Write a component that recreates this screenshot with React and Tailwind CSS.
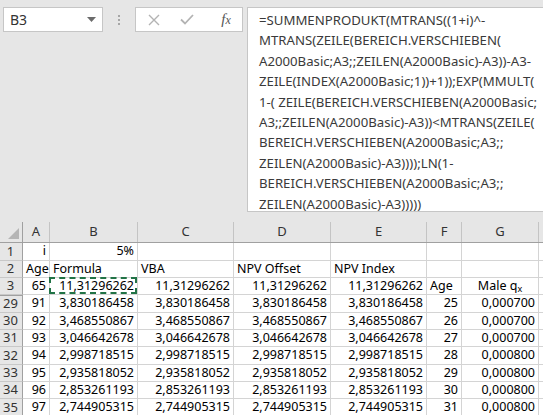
import React from 'react';

const formulaLines = [
  '=SUMMENPRODUKT(MTRANS((1+i)^-',
  'MTRANS(ZEILE(BEREICH.VERSCHIEBEN(',
  'A2000Basic;A3;;ZEILEN(A2000Basic)-A3))-A3-',
  'ZEILE(INDEX(A2000Basic;1))+1));EXP(MMULT(',
  '1-( ZEILE(BEREICH.VERSCHIEBEN(A2000Basic;',
  'A3;;ZEILEN(A2000Basic)-A3))<MTRANS(ZEILE(',
  'BEREICH.VERSCHIEBEN(A2000Basic;A3;;',
  'ZEILEN(A2000Basic)-A3))));LN(1-',
  'BEREICH.VERSCHIEBEN(A2000Basic;A3;;',
  'ZEILEN(A2000Basic)-A3)))))',
];

const cols = [
  { key: 'A', w: 'w-[27px]' },
  { key: 'B', w: 'w-[88px]' },
  { key: 'C', w: 'w-[96px]' },
  { key: 'D', w: 'w-[97px]' },
  { key: 'E', w: 'w-[96px]' },
  { key: 'F', w: 'w-[35px]' },
  { key: 'G', w: 'w-[77px]' },
];

const values = [
  ['91', '3,830186458', '25', '0,000700'],
  ['92', '3,468550867', '26', '0,000700'],
  ['93', '3,046642678', '27', '0,000700'],
  ['94', '2,998718515', '28', '0,000800'],
  ['95', '2,935818052', '29', '0,000800'],
  ['96', '2,853261193', '30', '0,000800'],
  ['97', '2,744905315', '31', '0,000800'],
];

const rows = [
  { n: '1', h: 'h-[18px]', cells: [['i', 'r'], ['5%', 'r'], ['', 'l'], ['', 'l'], ['', 'l'], ['', 'l'], ['', 'l']] },
  { n: '2', h: 'h-[17px]', cells: [['Age', 'l'], ['Formula', 'l'], ['VBA', 'l'], ['NPV Offset', 'l'], ['NPV Index', 'l'], ['', 'l'], ['', 'l']] },
  {
    n: '3',
    h: 'h-[17px]',
    cells: [['65', 'r'], ['11,31296262', 'r', true], ['11,31296262', 'r'], ['11,31296262', 'r'], ['11,31296262', 'r'], ['Age', 'l'], ['qx', 'c']],
  },
  ...values.map((v, i) => ({
    n: String(29 + i),
    h: ['h-[18px]', 'h-[17px]', 'h-[17px]'][i % 3],
    top: i === 0,
    cells: [[v[0], 'r'], [v[1], 'r'], [v[1], 'r'], [v[1], 'r'], [v[1], 'r'], [v[2], 'r'], [v[3], 'r']],
  })),
];

const alignClass = { r: 'justify-end', l: 'justify-start', c: 'justify-center' };

const Cell = ({ text, align, width, marquee }) => (
  <div
    className={`relative ${width} shrink-0 h-full flex items-center px-[3px] border-r border-b border-[#d4d4d4] overflow-visible whitespace-nowrap ${alignClass[align]}`}
  >
    {text === 'qx' ? (
      <span>
        Male q<sub className="text-[9px]">x</sub>
      </span>
    ) : (
      <span>{text}</span>
    )}
    {marquee && <div className="absolute -left-px -top-px w-[calc(100%+1px)] h-[calc(100%+1px)] border-2 border-dashed border-[#217346]" />}
  </div>
);

export default function App() {
  return (
    <div className="w-[543px] h-[415px] overflow-hidden bg-[#e6e6e6] flex flex-col" style={{ fontFamily: '"Noto Sans", "Open Sans", sans-serif' }}>
      {/* formula bar */}
      <div className="flex items-start pt-[7px] pl-[3px] h-[222px] shrink-0">
        <div className="w-[100px] h-[25px] bg-white border border-[#c6c6c6] flex items-center justify-between pl-[6px] pr-[6px] text-[14px] text-[#333]">
          <span>B3</span>
          <svg width="9" height="5" viewBox="0 0 9 5">
            <path d="M0 0 L9 0 L4.5 5 Z" fill="#6b6b6b" />
          </svg>
        </div>
        <div className="w-[32px] h-[25px] flex flex-col items-center justify-center gap-[2px]">
          <div className="w-[2px] h-[2px] bg-[#a6a6a6]" />
          <div className="w-[2px] h-[2px] bg-[#a6a6a6]" />
          <div className="w-[2px] h-[2px] bg-[#a6a6a6]" />
        </div>
        <div className="w-[108px] h-[25px] bg-white border border-[#c6c6c6] flex items-center">
          <div className="w-[36px] flex justify-center">
            <svg width="12" height="12" viewBox="0 0 12 12">
              <path d="M1 1 L11 11 M11 1 L1 11" stroke="#b3b3b3" strokeWidth="1.4" />
            </svg>
          </div>
          <div className="w-[30px] flex justify-center">
            <svg width="14" height="11" viewBox="0 0 14 11">
              <path d="M1 5.5 L5 9.5 L13 1" stroke="#b3b3b3" strokeWidth="1.8" fill="none" />
            </svg>
          </div>
          <div className="flex-1 flex justify-center pl-[8px]">
            <span className="italic text-[15px] text-[#555]" style={{ fontFamily: '"Liberation Serif", serif' }}>
              f<span className="text-[12px]">x</span>
            </span>
          </div>
        </div>
        <div className="ml-[4px] flex-1 h-[205px] bg-white border-l border-t border-b border-[#c6c6c6] pl-[11px] pt-[2px] text-[13.2px] leading-[20.4px] text-[#3a3a3a] whitespace-nowrap overflow-visible">
          {formulaLines.map((l, i) => (
            <div key={i}>{l}</div>
          ))}
        </div>
      </div>

      {/* grid */}
      <div className="flex-1 bg-white text-[12.5px] text-black">
        <div className="flex h-[21px] bg-[#e6e6e6] border-b border-[#a0a0a0] text-[13px] text-[#333]">
          <div className="w-[23px] shrink-0 h-full border-r border-[#a0a0a0] relative">
            <svg className="absolute right-[3px] bottom-[3px]" width="11" height="11" viewBox="0 0 11 11">
              <path d="M11 0 L11 11 L0 11 Z" fill="#b5b5b5" />
            </svg>
          </div>
          {cols.map((c) => (
            <div key={c.key} className={`${c.w} shrink-0 h-full flex items-center justify-center border-r border-[#c4c4c4]`}>
              {c.key}
            </div>
          ))}
          <div className="flex-1" />
        </div>
        {rows.map((r) => (
          <div key={r.n} className={`flex ${r.h}`}>
            <div
              className={`w-[23px] shrink-0 h-full flex items-center justify-center pr-[1px] bg-[#e6e6e6] border-r border-[#a0a0a0] border-b border-b-[#c8c8c8] text-[13px] text-[#333] ${
                r.top ? 'border-t border-t-[#a0a0a0]' : ''
              }`}
            >
              {r.n}
            </div>
            {r.cells.map((c, i) => (
              <Cell key={i} text={c[0]} align={c[1]} marquee={c[2]} width={cols[i].w} />
            ))}
            <div className="flex-1 h-full border-b border-[#d4d4d4]" />
          </div>
        ))}
      </div>
    </div>
  );
}
